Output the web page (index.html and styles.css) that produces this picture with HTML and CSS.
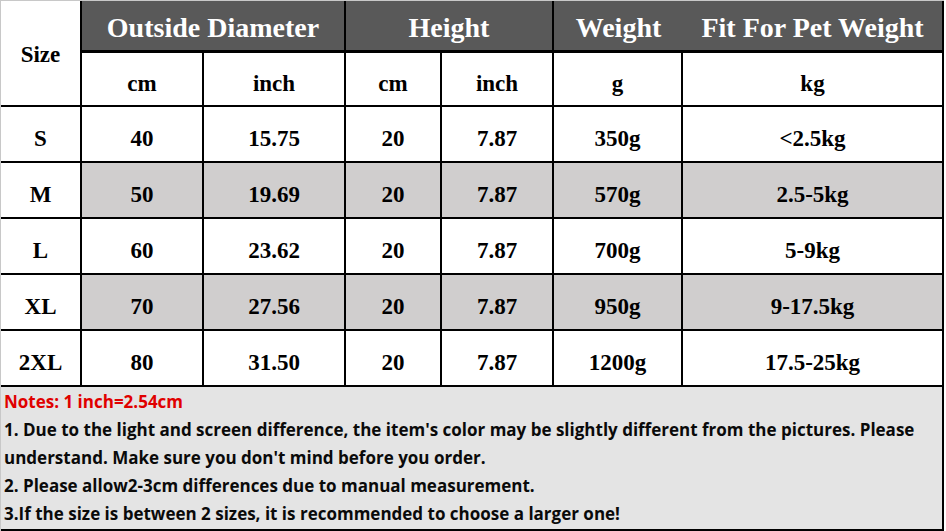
FILE: index.html
```html
<!DOCTYPE html>
<html>
<head>
<meta charset="utf-8">
<link rel="stylesheet" href="styles.css">
</head>
<body>
<div class="sheet">
  <div class="grid">
    <div class="c size-h">Size</div>
    <div class="c h span2">Outside Diameter</div>
    <div class="c h span2">Height</div>
    <div class="c h nob">Weight</div>
    <div class="c h">Fit For Pet Weight</div>

    <div class="c">cm</div><div class="c">inch</div><div class="c">cm</div><div class="c">inch</div><div class="c">g</div><div class="c">kg</div>

    <div class="c">S</div><div class="c">40</div><div class="c">15.75</div><div class="c">20</div><div class="c">7.87</div><div class="c">350g</div><div class="c">&lt;2.5kg</div>

    <div class="c">M</div><div class="c g">50</div><div class="c g">19.69</div><div class="c g">20</div><div class="c g">7.87</div><div class="c g">570g</div><div class="c g">2.5-5kg</div>

    <div class="c">L</div><div class="c">60</div><div class="c">23.62</div><div class="c">20</div><div class="c">7.87</div><div class="c">700g</div><div class="c">5-9kg</div>

    <div class="c">XL</div><div class="c g">70</div><div class="c g">27.56</div><div class="c g">20</div><div class="c g">7.87</div><div class="c g">950g</div><div class="c g">9-17.5kg</div>

    <div class="c">2XL</div><div class="c">80</div><div class="c">31.50</div><div class="c">20</div><div class="c">7.87</div><div class="c">1200g</div><div class="c">17.5-25kg</div>
  </div>
  <div class="notes">
    <p class="red">Notes: 1 inch=2.54cm</p>
    <p>1. Due to the light and screen difference, the item's color may be slightly different from the pictures. Please understand. Make sure you don't mind before you order.</p>
    <p>2. Please allow2-3cm differences due to manual measurement.</p>
    <p>3.If the size is between 2 sizes, it is recommended to choose a larger one!</p>
  </div>
</div>
</body>
</html>
```
FILE: styles.css
```css
html, body {
  margin: 0;
  padding: 0;
  background: #ffffff;
}
.sheet {
  width: 944px;
  height: 531px;
  border-top: 1px solid #c8c8c8;
  border-left: 1px solid #c8c8c8;
  box-sizing: border-box;
  display: flex;
  flex-direction: column;
}
.grid {
  display: grid;
  grid-template-columns: 81px 122px 142px 96px 112px 129px 1fr;
  grid-template-rows: 52px 54px 56px 56px 56px 56px 56px;
  font-family: "Liberation Serif", "Times New Roman", serif;
  font-weight: bold;
  font-size: 23px;
  color: #000;
}
.c {
  display: flex;
  align-items: center;
  justify-content: center;
  padding-top: 9px;
  border-right: 2px solid #000;
  border-bottom: 2px solid #000;
  box-sizing: border-box;
  background: #fff;
  white-space: nowrap;
}
.size-h {
  grid-row: span 2;
  padding-top: 4px;
}
.h {
  background: #595959;
  color: #fff;
  font-size: 28px;
  padding-top: 5px;
  border-bottom-width: 3px;
}
.span2 {
  grid-column: span 2;
}
.nob {
  border-right: none;
}
.g {
  background: #d0cece;
}
.notes {
  flex: 1;
  background: #e4e4e4;
  border-right: 2px solid #000;
  border-bottom: 2px solid #000;
  padding: 1px 4px 0 3px;
  font-family: "Open Sans", "Noto Sans", sans-serif;
  font-weight: bold;
  font-size: 17px;
  line-height: 28px;
  color: #0a0a0a;
}
.notes p {
  margin: 0;
}
.notes .red {
  color: #e00000;
}
```
